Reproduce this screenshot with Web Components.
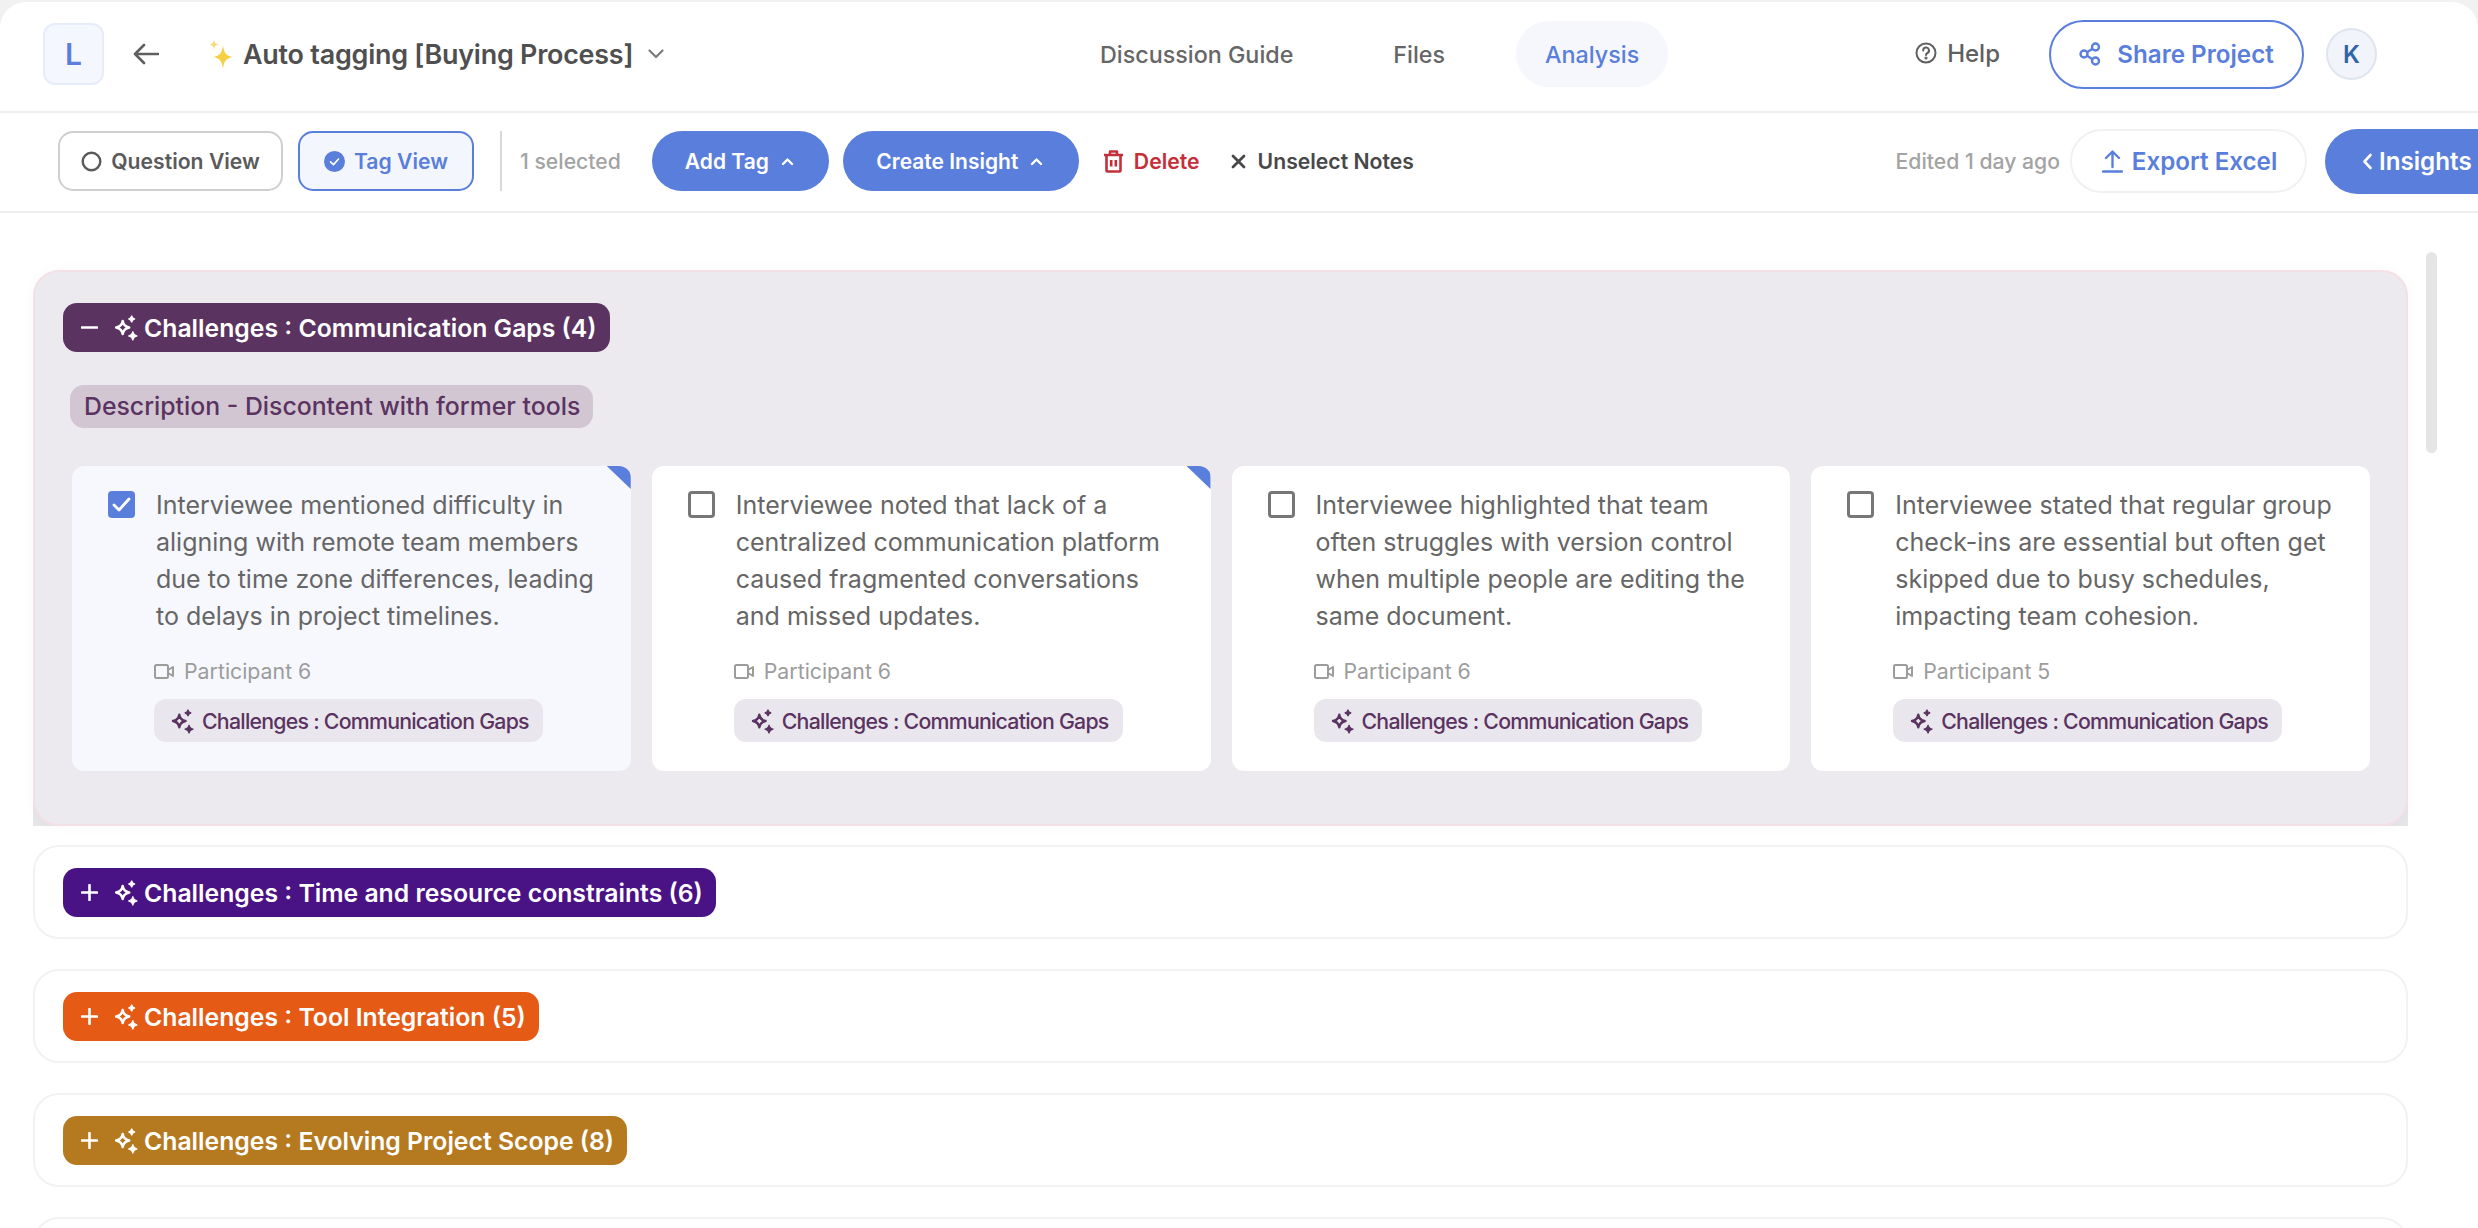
<!DOCTYPE html>
<html lang="en">
<head>
<meta charset="utf-8">
<title>Auto tagging</title>
<style>
html,body{margin:0;height:100%;overflow:hidden;background:#f1f1f1;font-family:Inter,"Liberation Sans",sans-serif}
</style>
</head>
<body>
<app-shell>
  <app-header slot="header"></app-header>
  <app-toolbar slot="toolbar"></app-toolbar>
  <tag-group slot="groups" open color="#5a3360" title-text="Challenges : Communication Gaps (4)" description="Description - Discontent with former tools" tint="#d2c6d3">
    <note-card checked corner participant="Participant 6" tag="Challenges : Communication Gaps">Interviewee mentioned difficulty in aligning with remote team members due to time zone differences, leading to delays in project timelines.</note-card>
    <note-card corner participant="Participant 6" tag="Challenges : Communication Gaps">Interviewee noted that lack of a centralized communication platform caused fragmented conversations and missed updates.</note-card>
    <note-card participant="Participant 6" tag="Challenges : Communication Gaps">Interviewee highlighted that team often struggles with version control when multiple people are editing the same document.</note-card>
    <note-card participant="Participant 5" tag="Challenges : Communication Gaps">Interviewee stated that regular group check-ins are essential but often get skipped due to busy schedules, impacting team cohesion.</note-card>
  </tag-group>
  <tag-group slot="groups" color="#4a1385" title-text="Challenges : Time and resource constraints (6)"></tag-group>
  <tag-group slot="groups" color="#e55a15" title-text="Challenges : Tool Integration (5)"></tag-group>
  <tag-group slot="groups" color="#b57a1f" title-text="Challenges : Evolving Project Scope (8)"></tag-group>
  <tag-group slot="groups" empty></tag-group>
</app-shell>
<script>
const BLUE = '#5a7edb';
const sparkle = (s) => `<svg width="${s}" height="${s}" viewBox="0 0 24 24" aria-hidden="true"><path d="M9.5 6.2C10.1 9.6 11.9 11.4 15.3 12C11.9 12.6 10.1 14.4 9.5 17.8C8.9 14.4 7.1 12.6 3.7 12C7.1 11.4 8.9 9.6 9.5 6.2Z" fill="none" stroke="currentColor" stroke-width="2.2" stroke-linejoin="round"/><path d="M17.5 1.5C17.8 3.4 18.6 4.2 20.5 4.5C18.6 4.8 17.8 5.6 17.5 7.5C17.2 5.6 16.4 4.8 14.5 4.5C16.4 4.2 17.2 3.4 17.5 1.5Z" fill="currentColor" stroke="currentColor"/><path d="M18.5 15.5C18.9 18 19.8 19 22.5 19.5C19.8 20 18.9 21 18.5 23.5C18.1 21 17.2 20 14.5 19.5C17.2 19 18.1 18 18.5 15.5Z" fill="currentColor" stroke="currentColor"/></svg>`;

class Base extends HTMLElement {
  constructor(){ super(); this.attachShadow({mode:'open'}); }
  connectedCallback(){ this.shadowRoot.innerHTML = `<style>${this.css()}</style>${this.html()}`; }
  css(){ return ''; }
  html(){ return '<slot></slot>'; }
}

customElements.define('app-shell', class extends Base {
  css(){ return `
    :host{display:flex;flex-direction:column;height:1226px;margin-top:2px;background:#fff;border-radius:26px 26px 0 0;overflow:hidden;}
    .main{flex:1;min-height:0;display:flex;overflow:hidden}
    .list{width:2408px;flex:none;padding:57px 0 0 33px;box-sizing:border-box;display:flex;flex-direction:column;align-items:stretch}
    .thumb{width:11px;height:201px;margin:39px 0 0 18px;background:#e5e5e5;border-radius:6px;flex:none}
  `; }
  html(){ return `<slot name="header"></slot><slot name="toolbar"></slot>
    <div class="main"><div class="list"><slot name="groups"></slot></div><div class="thumb"></div></div>`; }
});

customElements.define('app-header', class extends Base {
  css(){ return `
    :host{display:grid;grid-template-columns:1100px 1fr auto;align-items:center;height:111px;box-sizing:border-box;border-bottom:2px solid #eeeeee;padding-bottom:5px;flex:none}
    .left,.nav,.right{display:flex;align-items:center}
    .logo{margin-left:43px;width:61px;height:62px;box-sizing:border-box;background:#f5f7fe;border:2px solid #e7ecfa;border-radius:12px;display:flex;align-items:center;justify-content:center;color:${BLUE};font-size:30px;font-weight:600}
    .back{margin-left:29px;color:#5f5f5f;display:flex}
    .spark{margin-left:50px;display:flex}
    .title{margin-left:10px;font-size:26.9px;font-weight:600;color:#4f4f4f;white-space:nowrap;letter-spacing:-.22px}
    .chev{margin-left:15px;display:flex;color:#7d7d7d}
    .nav a{font-size:23.3px;font-weight:500;color:#666;white-space:nowrap}
    .files{margin-left:100px}
    .nav a.active{margin-left:71px;color:${BLUE};background:#f5f7fd;height:66px;padding:0 29px;border-radius:33px;display:flex;align-items:center}
    .right{padding-right:101px}
    .help{display:flex;align-items:center;gap:10px;font-size:24px;font-weight:500;color:#5f5f5f;margin-top:-2px}
    .share{margin-left:49px;height:69px;width:255px;box-sizing:border-box;border:2px solid ${BLUE};border-radius:35px;display:flex;align-items:center;justify-content:center;gap:16px;color:${BLUE};font-size:24.2px;font-weight:600;white-space:nowrap}
    .avatar{margin-left:22px;width:51px;height:52px;box-sizing:border-box;border-radius:50%;background:#f1f4fa;border:2px solid #dfe4ee;display:flex;align-items:center;justify-content:center;color:#2f64a9;font-size:24px;font-weight:600}
  `; }
  html(){ return `
    <div class="left">
      <div class="logo">L</div>
      <div class="back"><svg width="26" height="22" viewBox="0 0 26 22" fill="none" stroke="currentColor" stroke-width="2.6" stroke-linecap="round" stroke-linejoin="round"><path d="M25 11H2M11 2l-9 9 9 9"/></svg></div>
      <div class="spark"><svg width="24" height="32" viewBox="0 0 24 32"><path d="M14 7C15 15 17 18 24 19C17 20 15 23 14 31C13 23 11 20 4 19C11 18 13 15 14 7Z" fill="#f7cf45"/><path d="M5 1C5.5 5 6.5 6 10 6.5C6.5 7 5.5 8 5 12C4.5 8 3.5 7 0 6.5C3.5 6 4.5 5 5 1Z" fill="#f9dc7a"/></svg></div>
      <div class="title">Auto tagging [Buying Process]</div>
      <div class="chev"><svg width="16" height="10" viewBox="0 0 16 10" fill="none" stroke="currentColor" stroke-width="2.2" stroke-linecap="round" stroke-linejoin="round"><path d="M1.5 1.5L8 8l6.5-6.5"/></svg></div>
    </div>
    <div class="nav"><a>Discussion Guide</a><a class="files">Files</a><a class="active">Analysis</a></div>
    <div class="right">
      <div class="help"><svg width="22" height="22" viewBox="0 0 22 22" fill="none" stroke="currentColor" stroke-width="2" stroke-linecap="round"><circle cx="11" cy="11" r="9.5"/><path d="M8.2 8.5a2.9 2.9 0 1 1 4.3 2.5c-.9.5-1.5 1-1.5 2"/><circle cx="11" cy="16" r=".6" fill="currentColor"/></svg>Help</div>
      <div class="share"><svg width="22" height="24" viewBox="0 0 22 24" fill="none" stroke="currentColor" stroke-width="2.4"><circle cx="16.5" cy="5" r="3.5"/><circle cx="5" cy="12" r="3.5"/><circle cx="16.5" cy="19" r="3.5"/><path d="M8 10.2l5.5-3.4M8 13.8l5.5 3.4"/></svg>Share Project</div>
      <div class="avatar">K</div>
    </div>`; }
});

customElements.define('app-toolbar', class extends Base {
  css(){ return `
    :host{display:flex;align-items:center;height:100px;box-sizing:border-box;border-bottom:2px solid #eeeeee;flex:none;padding:0 0 2px 58px;font-size:21.2px;font-weight:600;white-space:nowrap}
    .view{height:60px;box-sizing:border-box;border-radius:15px;display:flex;align-items:center;justify-content:center;gap:9px;border:2px solid #cfcfcf;color:#5a5a5a;width:225px}
    .view.on{margin-left:15px;width:176px;border-color:${BLUE};background:#f4f6fd;color:${BLUE}}
    .sep{width:2px;height:60px;background:#d8d8d8;margin-left:26px}
    .count{margin-left:18px;color:#a3a3a3;font-weight:500}
    .pill{height:60px;border-radius:30px;background:${BLUE};color:#fff;display:flex;align-items:center;justify-content:center;gap:12px;box-sizing:border-box;font-size:21px}
    .add{margin-left:31px;width:177px;padding-right:2px}
    .create{margin-left:14px;width:236px;padding-right:2px}
    .del{margin-left:24px;display:flex;align-items:center;gap:10px;color:#c4303a}
    .un{margin-left:31px;display:flex;align-items:center;gap:12px;color:#484848}
    .end{margin-left:auto;display:flex;align-items:center}
    .edited{color:#a3a3a3;font-weight:500;font-size:21.2px}
    .export{margin-left:10px;width:237px;height:64px;box-sizing:border-box;border:2px solid #f1f1f1;border-radius:32px;display:flex;align-items:center;justify-content:center;gap:9px;color:${BLUE};font-size:24.2px;padding-left:2px}
    .insights{margin-left:18px;width:153px;height:65px;box-sizing:border-box;padding-left:37px;background:${BLUE};color:#fff;border-radius:33px 0 0 33px;display:flex;align-items:center;gap:6px;font-size:24.2px;overflow:hidden}
  `; }
  html(){ const up='<svg width="13" height="9" viewBox="0 0 13 9" fill="none" stroke="currentColor" stroke-width="2.4" stroke-linecap="round" stroke-linejoin="round"><path d="M2 7l4.5-4.5L11 7"/></svg>';
    return `
    <div class="view"><svg width="21" height="21" viewBox="0 0 21 21" fill="none" stroke="#5a5a5a" stroke-width="2.4"><circle cx="10.5" cy="10.5" r="8.8"/></svg>Question View</div>
    <div class="view on"><svg width="21" height="21" viewBox="0 0 21 21"><circle cx="10.5" cy="10.5" r="10.5" fill="${BLUE}"/><path d="M6.5 10.8l3 2.8 5-5.6" fill="none" stroke="#fff" stroke-width="1.6" stroke-linecap="round" stroke-linejoin="round"/></svg>Tag View</div>
    <div class="sep"></div>
    <div class="count">1 selected</div>
    <div class="pill add">Add Tag ${up}</div>
    <div class="pill create">Create Insight ${up}</div>
    <div class="del"><svg width="21" height="24" viewBox="0 0 21 24" fill="none" stroke="currentColor" stroke-width="2.6" stroke-linejoin="round"><path d="M1 6h19M7 6V2.5h7V6M3.5 6v15.5a1 1 0 0 0 1 1h12a1 1 0 0 0 1-1V6M8.2 11v6.5M12.8 11v6.5"/></svg>Delete</div>
    <div class="un"><svg width="15" height="15" viewBox="0 0 15 15" fill="none" stroke="currentColor" stroke-width="2.8" stroke-linecap="round"><path d="M2 2l11 11M13 2L2 13"/></svg>Unselect Notes</div>
    <div class="end">
      <div class="edited">Edited 1 day ago</div>
      <div class="export"><svg width="21" height="24" viewBox="0 0 21 24" fill="none" stroke="currentColor" stroke-width="2.4" stroke-linecap="round" stroke-linejoin="round"><path d="M10.5 18V3M4 9l6.500-6.500L17 9M1 22.500h19"/></svg>Export Excel</div>
      <div class="insights"><svg width="11" height="17" viewBox="0 0 11 17" fill="none" stroke="currentColor" stroke-width="2.6" stroke-linecap="round" stroke-linejoin="round"><path d="M8.5 2L2.5 8.5l6 6.5"/></svg>Insights</div>
    </div>`; }
});

customElements.define('tag-group', class extends Base {
  css(){ const open=this.hasAttribute('open'); return `
    :host{display:block;flex:none;${open?'margin-bottom:19px;background:linear-gradient(transparent calc(100% - 26px),#e6e5e8 0);':'margin-bottom:30px;'}}
    .panel{box-sizing:border-box;border-radius:26px;
      ${open?`background:#eceaee;border:2px solid #f3e0e7;box-shadow:0 0 14px rgba(0,0,0,.03);padding:31px 36px 53px 28px;height:556px;`
            :`background:#fff;border:2px solid #f2f2f2;height:94px;padding:21px 28px;`}}
    .badge{display:inline-flex;align-items:center;height:49px;box-sizing:border-box;padding:0 13px 0 18px;border-radius:14px;background:${this.getAttribute('color')};color:#fff;font-size:24.75px;font-weight:600;white-space:nowrap;vertical-align:top}
    .sign{width:17px;height:17px;margin-right:14px;flex:none}
    .sp{display:flex;margin-right:5px}
    .desc{display:table;margin:33px 0 0 7px;height:43px;line-height:43px;padding:0 13px 0 14px;border-radius:14px;background:${this.getAttribute('tint')||'#ddd'};color:${this.getAttribute('color')};font-size:24.8px;font-weight:500;white-space:nowrap}
    .cards{display:grid;grid-template-columns:repeat(4,1fr);gap:21px;margin:38px 0 0 9px}
  `; }
  html(){ const open=this.hasAttribute('open');
    if(this.hasAttribute('empty')) return '<div class="panel"></div>';
    const sign = open
      ? '<svg class="sign" viewBox="0 0 17 17" stroke="currentColor" stroke-width="2.6" stroke-linecap="round"><path d="M1 8.5h15"/></svg>'
      : '<svg class="sign" viewBox="0 0 17 17" stroke="currentColor" stroke-width="2.6" stroke-linecap="round"><path d="M1 8.5h15M8.5 1v15"/></svg>';
    return `<div class="panel"><div class="badge">${sign}<span class="sp">${sparkle(27)}</span>${this.getAttribute('title-text')}</div>
      ${open?`<div class="desc">${this.getAttribute('description')}</div><div class="cards"><slot></slot></div>`:''}</div>`; }
});

customElements.define('note-card', class extends Base {
  css(){ const on=this.hasAttribute('checked'); return `
    :host{display:block;position:relative;box-sizing:border-box;height:305px;border-radius:12px;overflow:hidden;background:${on?'#f6f8fe':'#fff'};padding:21px 24px 0 0}
    .top{display:flex;align-items:flex-start}
    .box{width:27px;height:27px;box-sizing:border-box;margin:4px 21px 0 36px;flex:none;border-radius:4px;${on?`background:${BLUE};`:'border:3px solid #777;'}}
    .text{font-size:25px;line-height:37px;color:#666}
    .who{display:flex;align-items:center;gap:10px;margin:18px 0 0 82px;height:36px;color:#9c9c9c;font-size:21.3px}
    .tag{display:inline-flex;align-items:center;gap:7px;height:43px;margin:10px 0 0 82px;padding:0 14px 0 15px;border-radius:12px;background:#e9e7ed;color:#5a3360;font-size:21.3px;font-weight:500;letter-spacing:-.75px;white-space:nowrap}
    .corner{position:absolute;top:0;right:0;width:24px;height:23px;background:${BLUE};clip-path:polygon(0 0,100% 0,100% 100%)}
  `; }
  html(){ const on=this.hasAttribute('checked');
    return `${this.hasAttribute('corner')?'<div class="corner"></div>':''}
      <div class="top"><div class="box">${on?'<svg width="27" height="27" viewBox="0 0 27 27" fill="none" stroke="#fff" stroke-width="2.8" stroke-linecap="round" stroke-linejoin="round"><path d="M6 14l5 5 10-11"/></svg>':''}</div><div class="text"><slot></slot></div></div>
      <div class="who"><svg width="20" height="17" viewBox="0 0 20 17" fill="none" stroke="currentColor" stroke-width="2" stroke-linejoin="round"><rect x="1" y="2" width="13" height="13" rx="1.5"/><path d="M14 7l5-3v9l-5-3"/></svg>${this.getAttribute('participant')}</div>
      <div class="tag">${sparkle(26)}${this.getAttribute('tag')}</div>`; }
});
</script>
</body>
</html>
